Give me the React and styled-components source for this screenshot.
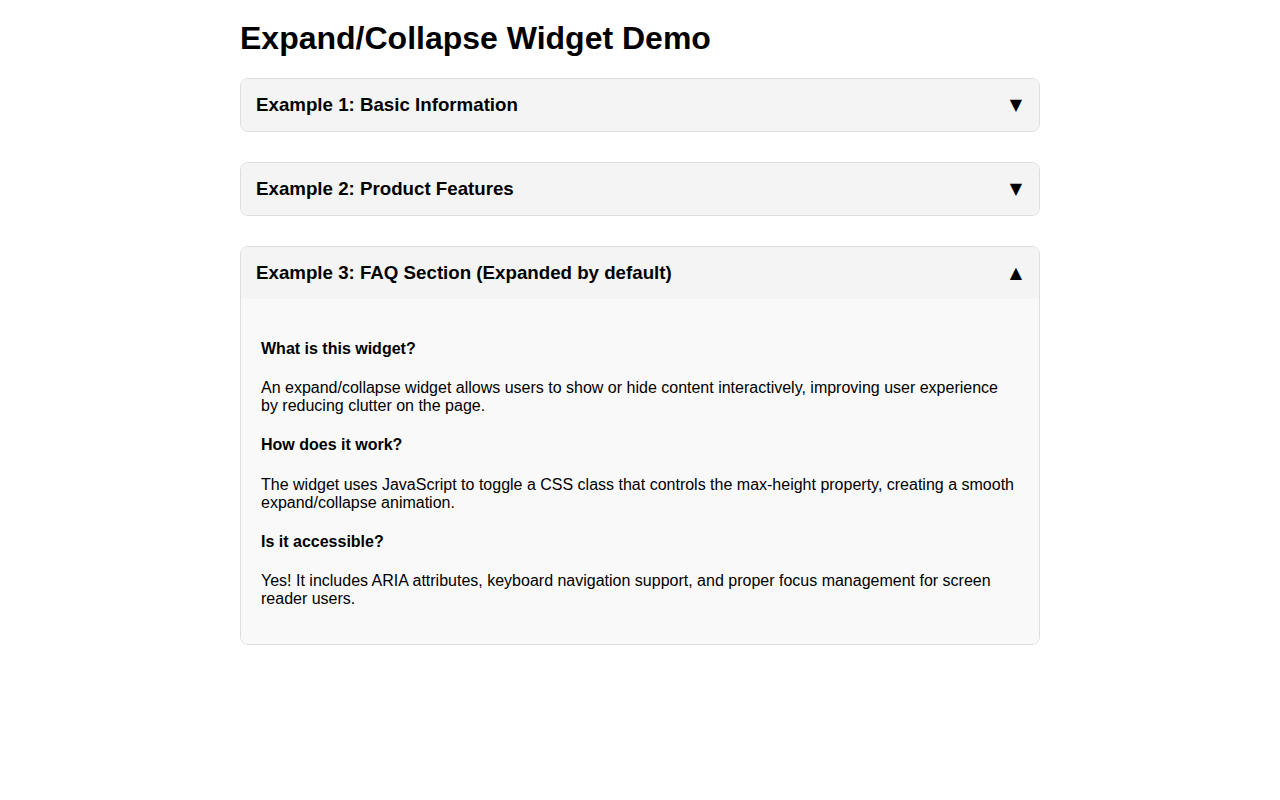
import React, { useState } from "react";
import styled, { createGlobalStyle } from "styled-components";

const Global = createGlobalStyle`
  html, body { margin: 0; padding: 0; background: #fff; }
  body { font-family: "Liberation Sans", Arial, sans-serif; color: #000; }
`;

const Page = styled.main`
  max-width: 800px;
  margin: 0 auto;
  padding: 20px 0;
`;

const Title = styled.h1`
  font-size: 32px;
  line-height: 37px;
  font-weight: bold;
  margin: 0 0 21px;
`;

const Widget = styled.section`
  border: 1px solid #ddd;
  border-radius: 8px;
  margin-bottom: 30.5px;
  overflow: hidden;
`;

const Header = styled.button`
  display: flex;
  width: 100%;
  align-items: center;
  justify-content: space-between;
  padding: 15px;
  border: 0;
  background: #f4f4f4;
  font-family: inherit;
  color: #000;
  cursor: pointer;
  text-align: left;
`;

const HeaderTitle = styled.h3`
  margin: 0;
  font-size: 18.72px;
  line-height: 21.5px;
  font-weight: bold;
`;

const Arrow = styled.span`
  font-family: "DejaVu Sans", sans-serif;
  font-size: 16px;
  line-height: 21px;
  margin-right: 2px;
`;

const Content = styled.div`
  background: #f9f9f9;
  padding: 20px;
  font-size: 16px;
  line-height: 18px;
`;

const Question = styled.h4`
  font-size: 16px;
  font-weight: bold;
  margin: 21.28px 0;
`;

const Answer = styled.p`
  margin: 16px 0;
`;

const faq = [
  {
    q: "What is this widget?",
    a: "An expand/collapse widget allows users to show or hide content interactively, improving user experience by reducing clutter on the page.",
  },
  {
    q: "How does it work?",
    a: "The widget uses JavaScript to toggle a CSS class that controls the max-height property, creating a smooth expand/collapse animation.",
  },
  {
    q: "Is it accessible?",
    a: "Yes! It includes ARIA attributes, keyboard navigation support, and proper focus management for screen reader users.",
  },
];

function Collapsible({ title, defaultOpen = false, children }) {
  const [open, setOpen] = useState(defaultOpen);
  return (
    <Widget>
      <Header aria-expanded={open} onClick={() => setOpen(!open)}>
        <HeaderTitle>{title}</HeaderTitle>
        <Arrow>{open ? "▲" : "▼"}</Arrow>
      </Header>
      {open && <Content>{children}</Content>}
    </Widget>
  );
}

export default function App() {
  return (
    <>
      <Global />
      <Page>
        <Title>Expand/Collapse Widget Demo</Title>
        <Collapsible title="Example 1: Basic Information">
          <Answer>This is some basic information.</Answer>
        </Collapsible>
        <Collapsible title="Example 2: Product Features">
          <Answer>Product features go here.</Answer>
        </Collapsible>
        <Collapsible title="Example 3: FAQ Section (Expanded by default)" defaultOpen>
          {faq.map((f) => (
            <React.Fragment key={f.q}>
              <Question>{f.q}</Question>
              <Answer>{f.a}</Answer>
            </React.Fragment>
          ))}
        </Collapsible>
      </Page>
    </>
  );
}
